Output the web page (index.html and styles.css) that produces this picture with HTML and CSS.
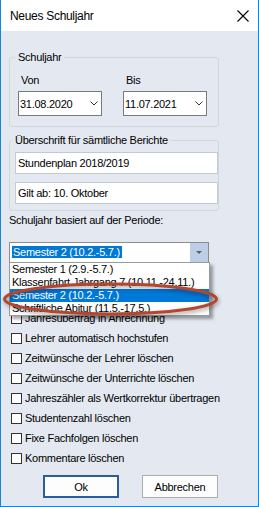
FILE: index.html
```html
<!DOCTYPE html>
<html lang="de">
<head>
    <meta charset="UTF-8">
    <meta name="viewport" content="width=device-width, initial-scale=1.0">
    <title>Neues Schuljahr</title>
    <link rel="stylesheet" href="styles.css">
</head>
<body>
    <div class="window">
        <div class="titlebar">
            <span class="title">Neues Schuljahr</span>
            <svg class="close" width="12" height="12" viewBox="0 0 12 12">
                <path d="M0.5 0.5 L11.5 11.5 M11.5 0.5 L0.5 11.5" stroke="#000" stroke-width="1.1" fill="none"/>
            </svg>
        </div>
        <div class="content">
            <fieldset class="group group-year">
                <legend>Schuljahr</legend>
                <div class="dates">
                    <div class="date-field">
                        <div class="field-label">Von</div>
                        <div class="datebox">
                            <span>31.08.2020</span>
                            <svg width="8" height="5" viewBox="0 0 8 5"><path d="M0.5 0.5 L4 4 L7.5 0.5" stroke="#333" fill="none"/></svg>
                        </div>
                    </div>
                    <div class="date-field">
                        <div class="field-label">Bis</div>
                        <div class="datebox">
                            <span>11.07.2021</span>
                            <svg width="8" height="5" viewBox="0 0 8 5"><path d="M0.5 0.5 L4 4 L7.5 0.5" stroke="#333" fill="none"/></svg>
                        </div>
                    </div>
                </div>
            </fieldset>

            <fieldset class="group group-heading">
                <legend>Überschrift für sämtliche Berichte</legend>
                <div class="textbox">Stundenplan 2018/2019</div>
                <div class="textbox second">Gilt ab: 10. Oktober</div>
            </fieldset>

            <div class="period-label">Schuljahr basiert auf der Periode:</div>
            <div class="combo">
                <div class="combo-value"><span class="combo-text">Semester 2 (10.2.-5.7.)</span></div>
                <div class="combo-button">
                    <svg width="6" height="3" viewBox="0 0 6 3"><path d="M0 0 L6 0 L3 3 Z" fill="#606060"/></svg>
                </div>
                <ul class="combo-list">
                    <li>Semester 1 (2.9.-5.7.)</li>
                    <li>Klassenfahrt Jahrgang 7 (10.11.-24.11.)</li>
                    <li class="selected">Semester 2 (10.2.-5.7.)</li>
                    <li>Schriftliche Abitur (11.5.-17.5.)</li>
                </ul>
            </div>

            <div class="options">
                <div class="option"><span class="check"></span>Jahresübertrag in Anrechnung</div>
                <div class="option"><span class="check"></span>Lehrer automatisch hochstufen</div>
                <div class="option"><span class="check"></span>Zeitwünsche der Lehrer löschen</div>
                <div class="option"><span class="check"></span>Zeitwünsche der Unterrichte löschen</div>
                <div class="option"><span class="check"></span>Jahreszähler als Wertkorrektur übertragen</div>
                <div class="option"><span class="check"></span>Studentenzahl löschen</div>
                <div class="option"><span class="check"></span>Fixe Fachfolgen löschen</div>
                <div class="option"><span class="check"></span>Kommentare löschen</div>
            </div>

            <div class="buttons">
                <button class="btn btn-default">Ok</button>
                <button class="btn">Abbrechen</button>
            </div>
        </div>

        <!-- red marker drawn over the open list -->
        <svg class="marker" width="222" height="40" viewBox="0 0 222 40">
            <ellipse cx="108.5" cy="19" rx="106" ry="15" fill="none" stroke="#b4462f" stroke-width="3"/>
        </svg>
    </div>
</body>
</html>
```

FILE: styles.css
```css
* {
    box-sizing: border-box;
}

html, body {
    margin: 0;
    padding: 0;
}

body {
    font-family: "Liberation Sans", Arial, sans-serif;
    font-size: 11px;
    letter-spacing: -0.27px;
    color: #000;
}

.window {
    position: relative;
    width: 259px;
    height: 507px;
    border: 1px solid #1883d7;
    border-top: none;
    background: #e4e9f1;
    display: flex;
    flex-direction: column;
}

.titlebar {
    height: 31px;
    background: #fff;
    display: flex;
    align-items: center;
    justify-content: space-between;
    padding: 0 9px 0 9px;
}

.title {
    font-size: 12px;
    letter-spacing: -0.3px;
}

.content {
    padding: 20px 0 0 8px;
}

.group {
    margin: 0;
    width: 210px;
    min-width: 0;
    border: 1px solid #d0d7df;
    border-radius: 3px;
}

.group legend {
    padding: 0 3px;
    margin-left: -3px;
    line-height: 13px;
}

.group-year {
    padding: 10px 0 10px 8px;
}

.dates {
    display: flex;
    gap: 21px;
}

.date-field {
    width: 84px;
}

.field-label {
    line-height: 13px;
    padding-left: 3px;
    margin-bottom: 4px;
}

.datebox {
    height: 25px;
    border: 1px solid #7a7a7a;
    background: #fff;
    display: flex;
    align-items: center;
    justify-content: space-between;
    padding: 0 3px 0 1px;
}

.datebox svg {
    display: block;
}

.group-heading {
    margin-top: 7px;
    padding: 5px 0 6px 5px;
}

.textbox {
    width: 203px;
    height: 22px;
    border: 1px solid #c3cad3;
    background: #fff;
    padding-left: 2px;
    line-height: 20px;
}

.textbox.second {
    margin-top: 8px;
}

.period-label {
    margin-top: 3px;
    line-height: 13px;
}

.combo {
    position: relative;
    margin-top: 15px;
    width: 200px;
    height: 21px;
    border: 1px solid #8c8c8c;
    background: #fff;
    display: flex;
}

.combo-value {
    flex: 1;
    padding: 3px 0 0 2px;
}

.combo-text {
    display: inline-block;
    background: #0078d7;
    color: #fff;
    line-height: 12px;
    padding: 0 2px 0 1px;
}

.combo-button {
    width: 18px;
    height: 19px;
    background: #bccfe7;
    display: flex;
    align-items: center;
    justify-content: center;
}

.combo-button svg {
    display: block;
}

.combo-list {
    position: absolute;
    top: 100%;
    left: -1px;
    width: 201px;
    height: 54px;
    margin: 0;
    padding: 0;
    list-style: none;
    background: #fff;
    border: 1px solid #9a9a9a;
    box-shadow: 3px 3px 3px rgba(0, 0, 0, 0.35);
    z-index: 2;
}

.combo-list li {
    height: 13px;
    line-height: 13px;
    padding-left: 2px;
    white-space: nowrap;
}

.combo-list li.selected {
    background: #0078d7;
    color: #fff;
}

.options {
    margin-top: 45px;
}

.option {
    display: flex;
    align-items: center;
    height: 20px;
    padding-left: 2px;
}

.check {
    width: 11px;
    height: 11px;
    border: 1px solid #333;
    background: #fff;
    margin-right: 3px;
}

.buttons {
    display: flex;
    gap: 23px;
    margin-top: 7px;
    padding-left: 34px;
}

.btn {
    width: 76px;
    height: 23px;
    padding: 0;
    font-family: inherit;
    font-size: 11px;
    letter-spacing: -0.27px;
    color: #000;
    background: #fdfdfd;
    border: 1px solid #adadad;
}

.btn-default {
    border: 2px solid #2a5d9c;
}

.marker {
    position: absolute;
    left: 1px;
    top: 280px;
    z-index: 3;
    filter: drop-shadow(1px 2px 2px rgba(0, 0, 0, 0.4));
}
```
